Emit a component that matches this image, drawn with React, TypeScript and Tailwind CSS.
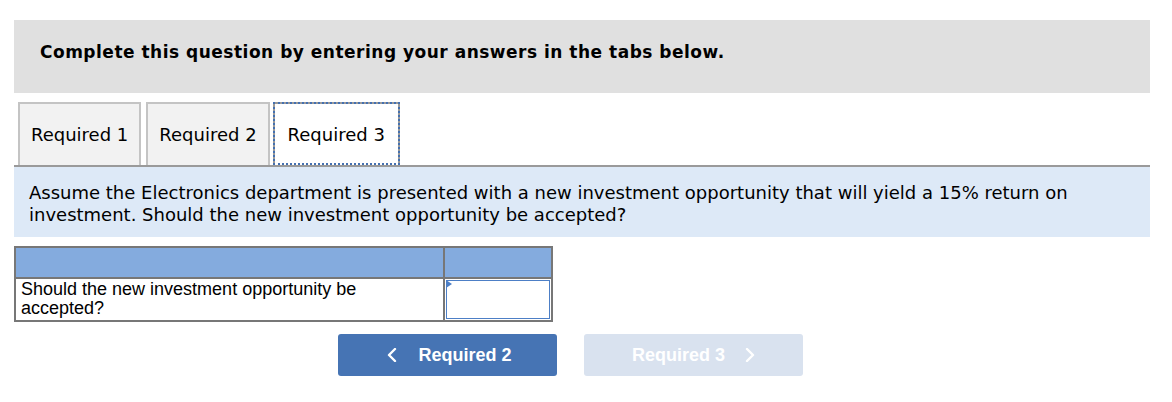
const tabs = ["Required 1", "Required 2", "Required 3"];

export default function App() {
  const active = 2;

  return (
    <div className="w-[1172px] h-[402px] bg-white pt-5 pl-[14px] pr-[22px] font-['DejaVu_Sans',Verdana,sans-serif] text-black">
      <div className="h-[73px] bg-[#e0e0e0] pl-[26px] pb-2 flex items-center">
        <p className="text-[17px] font-bold tracking-[0.5px]">
          Complete this question by entering your answers in the tabs below.
        </p>
      </div>

      <div className="mt-[9px] flex gap-[5px] pl-1 border-b-2 border-[#9a9a9a]">
        {tabs.map((t, i) =>
          i === active ? (
            <div
              key={t}
              className="h-[63px] px-[13px] -ml-[2px] flex items-center bg-white border-2 border-b-0 border-[#9a9a9a] outline-2 outline-dotted outline-[#4470b0] -outline-offset-2 text-[18px] mb-[-2px]"
            >
              {t}
            </div>
          ) : (
            <div
              key={t}
              className="h-[63px] px-[11px] flex items-center bg-[#f2f2f2] border-2 border-b-0 border-[#c4c4c4] text-[18px]"
            >
              {t}
            </div>
          )
        )}
      </div>

      <div className="h-[70px] bg-[#dde9f7] pl-[15px] pr-[60px] pt-[15px] text-[18px] leading-[22px]">
        Assume the Electronics department is presented with a new investment opportunity that will yield a 15% return on
        investment. Should the new investment opportunity be accepted?
      </div>

      <table className="mt-[9px] border-collapse border-2 border-[#777] font-['Liberation_Sans',Arial,sans-serif] text-[18px]">
        <tbody>
          <tr className="h-[31px] bg-[#84abde]">
            <td className="w-[429px] border-2 border-[#777]"></td>
            <td className="w-[108px] border-2 border-[#777]"></td>
          </tr>
          <tr className="h-[42px]">
            <td className="border-2 border-[#777] px-[5px] pb-[2px] leading-[19px] align-middle">
              Should the new investment opportunity be
              <br />
              accepted?
            </td>
            <td className="border-2 border-[#777] p-0">
              <div className="relative h-[39px] m-[1px] border border-[#4d7fc6] bg-white">
                <svg className="absolute -left-px -top-px" width="6" height="8" viewBox="0 0 6 8">
                  <path d="M0 0 L6 4 L0 8 Z" fill="#4d7fc6" />
                </svg>
              </div>
            </td>
          </tr>
        </tbody>
      </table>

      <div className="mt-[12px] pl-[324px] flex gap-[27px] font-['Liberation_Sans',Arial,sans-serif] text-[18px] font-bold text-white">
        <button className="w-[219px] h-[42px] rounded-[3px] bg-[#4674b4] flex items-center justify-center gap-[21px] pl-1">
          <svg width="10" height="14" viewBox="0 0 10 14" fill="none">
            <path d="M8 1 L2 7 L8 13" stroke="white" strokeWidth="2.4" strokeLinecap="round" strokeLinejoin="round" />
          </svg>
          <span>Required 2</span>
        </button>
        <button className="w-[219px] h-[42px] rounded-[3px] bg-[#d9e2ef] flex items-center justify-center gap-[20px]">
          <span>Required 3</span>
          <svg width="10" height="14" viewBox="0 0 10 14" fill="none">
            <path d="M2 1 L8 7 L2 13" stroke="white" strokeWidth="2.4" strokeLinecap="round" strokeLinejoin="round" />
          </svg>
        </button>
      </div>
    </div>
  );
}
